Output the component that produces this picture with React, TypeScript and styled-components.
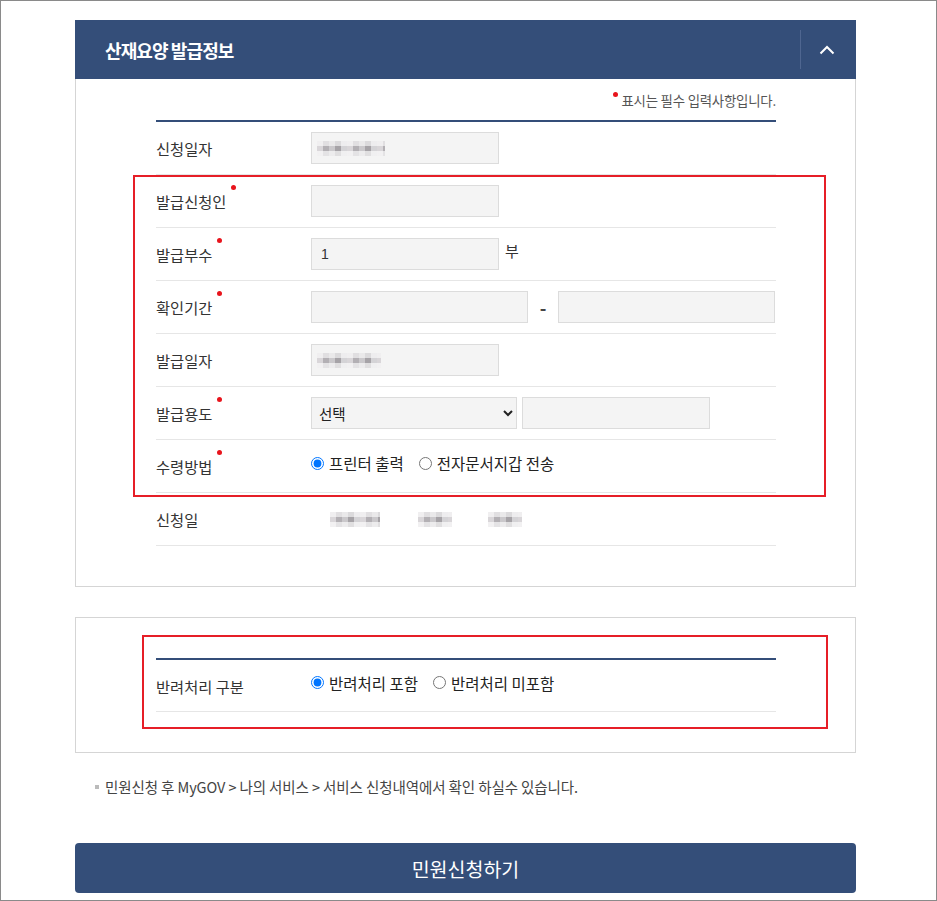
import React from "react";
import styled, { createGlobalStyle } from "styled-components";

const NAVY = "#344e79";

const Global = createGlobalStyle`
  html, body { margin: 0; padding: 0; background: #fff; }
  body { font-family: "Noto Sans CJK KR", "Noto Sans", "Liberation Sans", sans-serif; color: #333; }
  * { box-sizing: border-box; }
`;

const Frame = styled.div`
  width: 937px;
  height: 901px;
  border: 1px solid #8a8a8a;
  padding: 19px 0 0 74px;
  overflow: hidden;
`;

const Column = styled.div`
  width: 781px;
  display: flex;
  flex-direction: column;
`;

const Header = styled.div`
  height: 59px;
  background: ${NAVY};
  display: flex;
  align-items: center;
  padding-left: 30px;
`;

const Title = styled.h2`
  margin: 0;
  flex: 1;
  color: #fff;
  font-size: 18px;
  font-weight: 700;
  letter-spacing: -0.9px;
  line-height: 24px;
`;

const Toggle = styled.button`
  width: 56px;
  height: 39px;
  border: none;
  border-left: 1px solid #4f6690;
  background: transparent;
  display: flex;
  align-items: center;
  justify-content: center;
  padding: 0 4px 0 0;
  cursor: pointer;
`;

const Body = styled.div`
  position: relative;
  border: 1px solid #d5d5d5;
  border-top: none;
  padding: 12px 79px 40px 80px;
`;

const Box = styled.div`
  position: relative;
  border: 1px solid #d5d5d5;
  margin-top: 30px;
  padding: 40px 79px 40px 80px;
`;

const Required = styled.p`
  margin: 0 0 11px;
  display: flex;
  justify-content: flex-end;
  align-items: flex-start;
  gap: 3px;
  font-size: 13.4px;
  line-height: 18px;
  color: #555;
  letter-spacing: -0.2px;
`;

const NoteDot = styled.span`
  width: 5px;
  height: 5px;
  border-radius: 50%;
  background: #e8141c;
  margin-top: 1px;
`;

const TopLine = styled.div`
  height: 2px;
  background: ${NAVY};
`;

const Row = styled.div<{ $h?: number }>`
  height: ${(p) => p.$h ?? 53}px;
  border-bottom: 1px solid #e6e6e6;
  display: flex;
  align-items: center;
`;

const Label = styled.div`
  width: 155px;
  flex: none;
  display: flex;
  align-items: flex-start;
  font-size: 15.3px;
  line-height: 20px;
  color: #333;
`;

const Dot = styled.span`
  width: 5px;
  height: 5px;
  border-radius: 50%;
  background: #e8141c;
  margin: -6px 0 0 5px;
  flex: none;
`;

const Field = styled.div<{ $gap?: number }>`
  display: flex;
  align-items: center;
  gap: ${(p) => p.$gap ?? 5}px;
`;

const Input = styled.input<{ $w: number }>`
  width: ${(p) => p.$w}px;
  height: 32px;
  border: 1px solid #dcdcdc;
  background: #f4f4f4;
  padding: 0 9px;
  font-family: "Liberation Sans", "Noto Sans CJK KR", sans-serif;
  font-size: 14px;
  color: #333;
  outline: none;
`;

const FakeInput = styled.div<{ $w: number }>`
  width: ${(p) => p.$w}px;
  height: 32px;
  border: 1px solid #dcdcdc;
  background: #f4f4f4;
  display: flex;
  align-items: center;
  padding-left: 5px;
`;

const Select = styled.select`
  width: 206px;
  height: 32px;
  border: 1px solid #dcdcdc;
  background: #f4f4f4;
  padding: 0 3px;
  font-family: "Noto Sans CJK KR", sans-serif;
  font-size: 14.5px;
  color: #222;
  outline: none;
`;

const Unit = styled.span`
  font-size: 15px;
  color: #333;
  margin-left: 1px;
  align-self: flex-start;
  margin-top: 2px;
`;

const Dash = styled.span`
  width: 30px;
  text-align: center;
  font-size: 18px;
  font-weight: 700;
  color: #444;
`;

const Radios = styled.div`
  display: flex;
  align-items: center;
  gap: 15px;
  margin-top: -6px;
`;

const RadioLabel = styled.label`
  display: flex;
  align-items: center;
  font-size: 15.5px;
  line-height: 20px;
  color: #222;
  input {
    margin: 0 5px 0 0;
    width: 13px;
    height: 13px;
  }
`;

const Mosaic = styled.span<{ $w: number; $ml?: number }>`
  display: inline-block;
  width: ${(p) => p.$w}px;
  height: 15px;
  margin-left: ${(p) => p.$ml ?? 0}px;
  filter: blur(0.6px);
  background:
    linear-gradient(180deg, rgba(255,255,255,0.6) 0 5px, transparent 5px 10px, rgba(255,255,255,0.65) 10px 15px),
    repeating-linear-gradient(90deg, #d9d6d9 0 6px, #b3b0b4 6px 12px, #cac8cb 12px 18px, #a6a3a7 18px 24px, #d4d3d6 24px 30px);
`;

const Highlight = styled.div<{ $l: number; $t: number; $w: number; $h: number }>`
  position: absolute;
  left: ${(p) => p.$l}px;
  top: ${(p) => p.$t}px;
  width: ${(p) => p.$w}px;
  height: ${(p) => p.$h}px;
  border: 2px solid #e61e27;
  pointer-events: none;
`;

const Note = styled.p`
  margin: 25px 0 0 20px;
  display: flex;
  align-items: center;
  gap: 6px;
  font-size: 14.5px;
  line-height: 18px;
  color: #444;
  letter-spacing: -0.1px;
  &::before {
    content: "";
    width: 4px;
    height: 4px;
    background: #bbb;
  }
`;

const Submit = styled.button`
  margin-top: 47px;
  height: 50px;
  border: none;
  border-radius: 4px;
  background: ${NAVY};
  color: #fff;
  font-family: "Noto Sans CJK KR", sans-serif;
  font-size: 19.5px;
  cursor: pointer;
`;

function Req({ children }: { children: React.ReactNode }) {
  return (
    <Label>
      {children}
      <Dot />
    </Label>
  );
}

export default function App() {
  return (
    <>
      <Global />
      <Frame>
        <Column>
          <Header>
            <Title>산재요양 발급정보</Title>
            <Toggle aria-label="접기">
              <svg width="16" height="10" viewBox="0 0 16 10">
                <polyline points="1.5,8.5 8,2 14.5,8.5" fill="none" stroke="#fff" strokeWidth="2" />
              </svg>
            </Toggle>
          </Header>
          <Body>
            <Required>
              <NoteDot />
              표시는 필수 입력사항입니다.
            </Required>
            <TopLine />
            <Row>
              <Label>신청일자</Label>
              <FakeInput $w={188}>
                <Mosaic $w={68} />
              </FakeInput>
            </Row>
            <Row>
              <Req>발급신청인</Req>
              <Input $w={188} />
            </Row>
            <Row>
              <Req>발급부수</Req>
              <Field>
                <Input $w={188} defaultValue="1" />
                <Unit>부</Unit>
              </Field>
            </Row>
            <Row>
              <Req>확인기간</Req>
              <Field $gap={0}>
                <Input $w={217} />
                <Dash>-</Dash>
                <Input $w={217} />
              </Field>
            </Row>
            <Row>
              <Label>발급일자</Label>
              <FakeInput $w={188}>
                <Mosaic $w={64} />
              </FakeInput>
            </Row>
            <Row>
              <Req>발급용도</Req>
              <Field>
                <Select defaultValue="">
                  <option value="">선택</option>
                </Select>
                <Input $w={188} />
              </Field>
            </Row>
            <Row>
              <Req>수령방법</Req>
              <Radios>
                <RadioLabel>
                  <input type="radio" name="recv" defaultChecked />
                  프린터 출력
                </RadioLabel>
                <RadioLabel>
                  <input type="radio" name="recv" />
                  전자문서지갑 전송
                </RadioLabel>
              </Radios>
            </Row>
            <Row>
              <Label>신청일</Label>
              <Field $gap={0}>
                <Mosaic $w={50} $ml={19} />
                <Mosaic $w={34} $ml={38} />
                <Mosaic $w={34} $ml={36} />
              </Field>
            </Row>
            <Highlight $l={57} $t={96} $w={693} $h={322} />
          </Body>

          <Box>
            <TopLine />
            <Row $h={52}>
              <Label>반려처리 구분</Label>
              <Radios>
                <RadioLabel>
                  <input type="radio" name="reject" defaultChecked />
                  반려처리 포함
                </RadioLabel>
                <RadioLabel>
                  <input type="radio" name="reject" />
                  반려처리 미포함
                </RadioLabel>
              </Radios>
            </Row>
            <Highlight $l={66} $t={17} $w={686} $h={94} />
          </Box>

          <Note>민원신청 후 MyGOV &gt; 나의 서비스 &gt; 서비스 신청내역에서 확인 하실수 있습니다.</Note>

          <Submit>민원신청하기</Submit>
        </Column>
      </Frame>
    </>
  );
}
